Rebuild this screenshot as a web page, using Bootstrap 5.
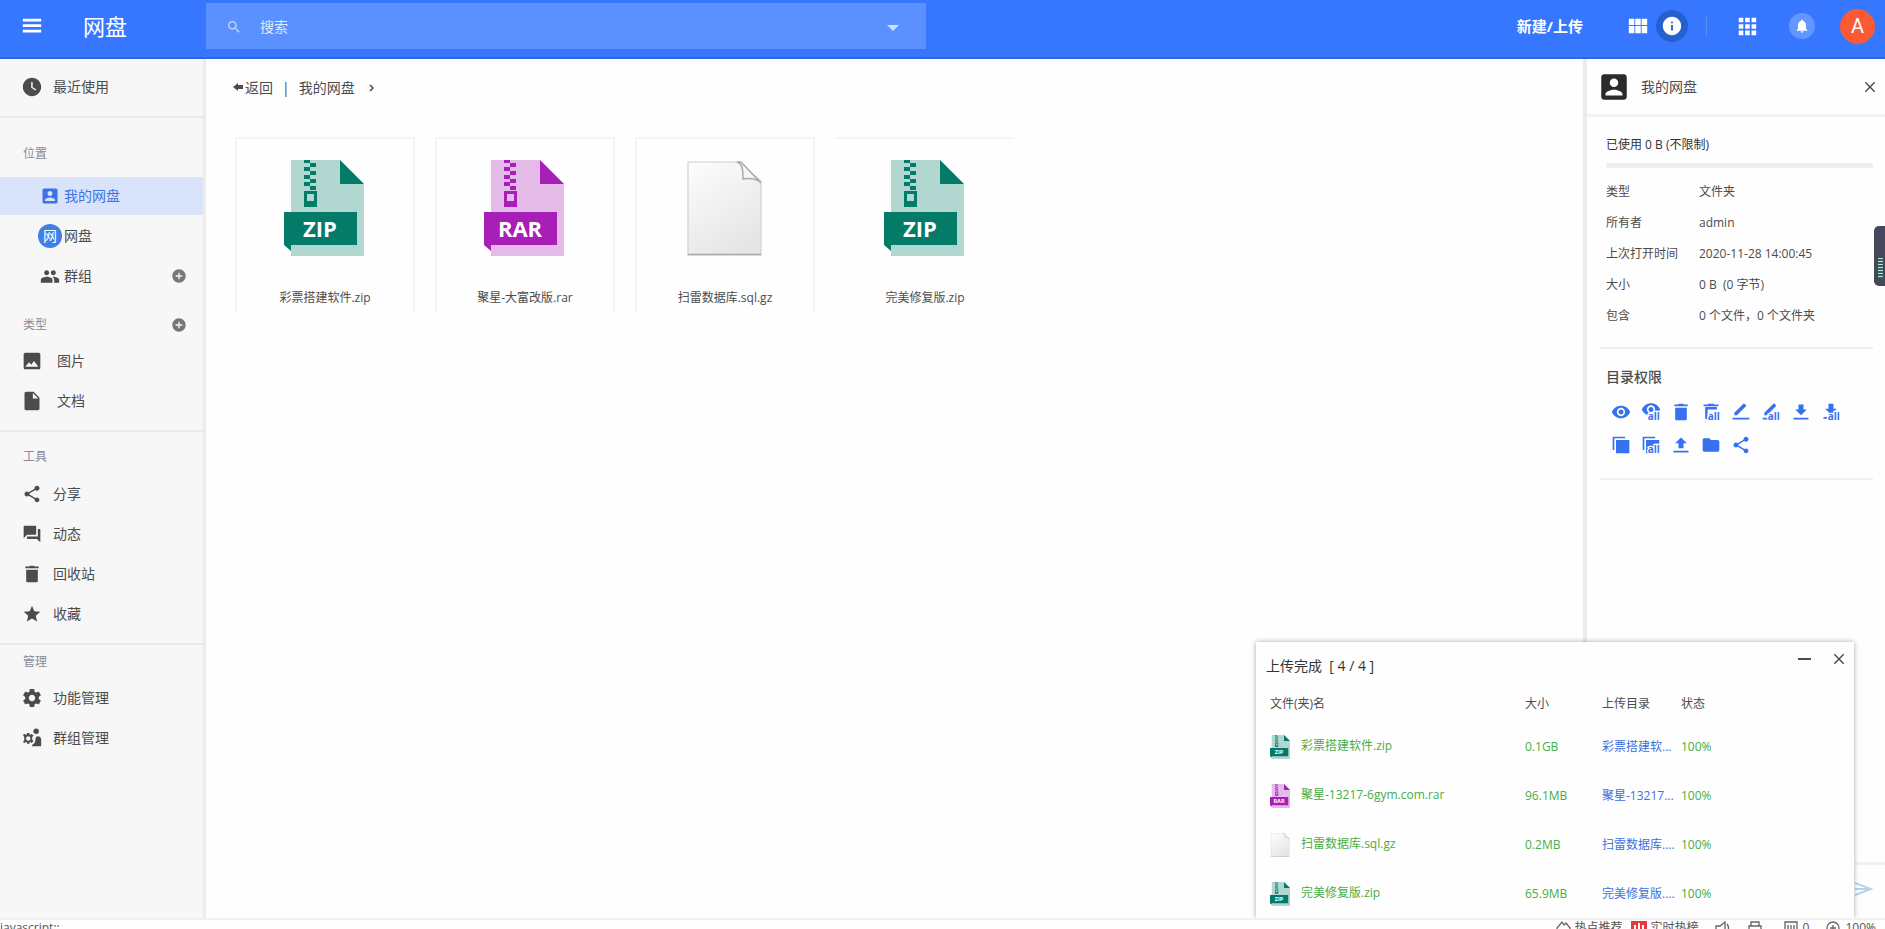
<!DOCTYPE html>
<html lang="zh-CN">
<head>
<meta charset="utf-8">
<meta name="viewport" content="width=device-width, initial-scale=1">
<title>网盘</title>
<link href="https://cdn.jsdelivr.net/npm/bootstrap@5.3.0/dist/css/bootstrap.min.css" rel="stylesheet">
<style>
  :root { --brand: #3777ff; }
  body { font-family: "Open Sans", "Noto Sans CJK SC", sans-serif; font-size: 12px; line-height: 20px; color: #4c4c4c; background: #fefefe; }
  a { color: inherit; text-decoration: none; }
  button { border: 0; padding: 0; background: none; color: inherit; display: flex; align-items: center; justify-content: center; }
  svg { fill: currentColor; flex: none; }
  .ic { width: 20px; height: 20px; }
  .ic-sm { width: 16px; height: 16px; }
  .ic-lg { width: 22px; height: 22px; }
  .t14 { font-size: 14px; }

  .topbar { height: 59px; background: var(--brand); color: #fff; border-bottom: 2px solid #2f66e0; padding: 0 10px 5px 0; }
  .brandbox { width: 206px; padding-left: 21px; gap: 40px; }
  .brandbox h1 { font-size: 22px; line-height: 32px; }
  .searchbox { width: 720px; height: 46px; background: #5b90ff; padding: 2px 22px 0 20px; gap: 16px; }
  .searchbox input { background: none; border: 0; outline: 0; color: #fff; font-size: 14px; }
  .searchbox input::placeholder { color: #dfe9ff; opacity: 1; }
  .newbtn { font-size: 15px; font-weight: 700; margin-right: 44px; }
  .round { border-radius: 50%; }
  .info-on { width: 32px; height: 32px; background: #2560cf; margin-left: 7px; }
  .sep { width: 1px; height: 22px; background: #5b8cf5; margin: 0 29px 0 18px; }
  .bell { width: 26px; height: 26px; background: #6496ff; margin: 0 25px 0 31px; }
  .avatar { width: 35px; height: 35px; background: #fb5a35; font: 20px Roboto, sans-serif; }

  .side { width: 206px; background: #f7f7f7; border-right: 3px solid #ececec; padding-top: 9px; }
  .side hr { margin: 10px 0 0; border: 0; height: 2px; background: #e9e9e9; opacity: 1; }
  .side ul { list-style: none; margin: 0; padding: 0; }
  .side li { height: 38px; margin-bottom: 2px; padding: 0 16px 0 22px; }
  .side li a { font-size: 14px; gap: 11px; }
  .side .wide a { gap: 15px; }
  .side .sub { padding-left: 40px; }
  .side .sub a { gap: 4px; }
  .side li.on { background: #d9e3f9; }
  .side li.on a { color: #3f72e8; }
  .side h2 { font-size: 12px; line-height: 24px; font-weight: 400; color: #8a8a96; padding: 0 16px 0 23px; }
  .side .plus { color: #777; }
  .side .h-place { margin: 24px 0 11px; }
  .side .h-type { margin: 18px 0 5px; }
  .side .h-tool { margin: 13px 0 6px; }
  .side .h-admin { margin: 5px 0; }
  .netdot { width: 24px; height: 24px; margin: 0 -2px; background: #3f7fe6; color: #fff; font-size: 14px; }

  .work { padding: 19px 29px; }
  .crumbs { gap: 9px; font-size: 14px; margin-left: -2px; }
  .files { margin-top: 39px; gap: 20px; }
  .filecard { width: 180px; height: 176px; padding-top: 21px; border: solid #f5f5f5; border-width: 2px 2px 0; }
  .filecard:last-child { border-left-color: transparent; border-right-color: transparent; }
  .filecard span { margin-top: 32px; }
  .bigicon { width: 80px; height: 96px; margin-right: 2px; }

  .details { width: 302px; border-left: 4px solid #ececec; }
  .dhead { height: 58px; border-bottom: 3px solid #f2f2f2; padding: 0 7px 0 10px; gap: 10px; }
  .dbody { padding: 18px 12px 0 13px; }
  .dbody > p { margin: 0 0 8px 6px; color: #333; }
  .quota { height: 5px; margin-left: 6px; border-radius: 0; background: #efefef; }
  .props { margin: 8px 0 16px 6px; }
  .props th { width: 93px; font-weight: 400; }
  .props th, .props td { padding: 0; height: 31px; vertical-align: middle; }
  .dbody hr { margin: 0; border: 0; height: 2px; background: #f0f0f0; opacity: 1; }
  .dbody h3 { font-size: 14px; line-height: 20px; font-weight: 500; margin: 18px 0 15px 6px; }
  .perms { color: #3671ef; gap: 13px 10px; padding: 0 24px 23px 11px; }
  .perms text { font: 700 12px "Open Sans", sans-serif; stroke: #fefefe; stroke-width: 3px; paint-order: stroke; }

  .grip { right: 0; top: 167px; width: 11px; height: 60px; background: #47475c; border-radius: 5px 0 0 5px; padding: 32px 2px 0 4px; z-index: 3; }
  .grip i { display: block; height: 21px; background: repeating-linear-gradient(#b9e4d3 0 1px, #35605c 1px 3px); }
  .corner { right: 0; bottom: 0; width: 30px; height: 56px; border-top: 3px solid #f0f0f0; color: #b5d4ee; padding-bottom: 6px; }

  .uploads { right: 31px; bottom: 0; width: 598px; background: #fefefe; box-shadow: 0 0 5px rgba(0,0,0,.35); clip-path: inset(-8px -8px 0 -8px); z-index: 2; }
  .uphead { height: 42px; padding: 6px 7px 0 10px; }
  .uphead h2 { font-size: 14px; line-height: 20px; font-weight: 400; color: #333; }
  .uphead .ctl { gap: 19px; margin-top: -15px; }
  .uptable { table-layout: fixed; }
  .uptable th { height: 38px; font-weight: 400; padding: 2px 0 0; }
  .uptable td { height: 49px; padding: 1px 0 0; color: #47ad47; white-space: nowrap; }
  .uptable th:first-child, .uptable td:first-child { padding-left: 14px; }
  .c-name { width: 269px; } .c-size { width: 77px; } .c-dir { width: 79px; }
  .uptable td a { color: #3d6fe0; }
  .mini { width: 20px; height: 24px; margin-right: 11px; }

  .status { height: 11px; border-top: 2px solid #f0f0f0; background: #fdfdfd; color: #555; padding-right: 9px; line-height: 16px; }
  .status .ic-sm { fill: none; stroke: #666; stroke-width: 1.3; }
</style>
</head>
<body class="vh-100 d-flex flex-column overflow-hidden">

<svg class="position-absolute" width="0" height="0" aria-hidden="true">
  <linearGradient id="paper" x1="0" y1="0" x2="0.5" y2="1"><stop offset="0" stop-color="#fdfdfd"/><stop offset="1" stop-color="#e6e6e6"/></linearGradient>
</svg>
<svg class="d-none" aria-hidden="true">
  <symbol id="menu" viewBox="0 0 24 24"><path d="M2 19h20v-3H2v3zm0-6h20v-3H2v3zm0-9v3h20V4H2z"/></symbol>
  <symbol id="search" viewBox="0 0 24 24"><path d="M15.5 14h-.79l-.28-.27C15.41 12.59 16 11.11 16 9.5 16 5.91 13.09 3 9.5 3S3 5.91 3 9.5 5.91 16 9.5 16c1.61 0 3.09-.59 4.23-1.57l.27.28v.79l5 4.99L20.49 19l-4.99-5zm-6 0C7.01 14 5 11.99 5 9.5S7.01 5 9.5 5 14 7.01 14 9.5 11.99 14 9.5 14z"/></symbol>
  <symbol id="clock" viewBox="0 0 24 24"><path d="M12 1C6 1 1 6 1 12s5 11 11 11 11-5 11-11S18 1 12 1zm4.2 15.2L11 13V6h1.8v6.2l4.5 2.7-1.1 1.3z"/></symbol>
  <symbol id="person" viewBox="0 0 24 24"><path d="M3 5v14c0 1.1.89 2 2 2h14c1.1 0 2-.9 2-2V5c0-1.1-.9-2-2-2H5c-1.11 0-2 .9-2 2zm12 4c0 1.66-1.34 3-3 3s-3-1.34-3-3 1.34-3 3-3 3 1.34 3 3zm-9 8c0-2 4-3.1 6-3.1s6 1.1 6 3.1v1H6v-1z"/></symbol>
  <symbol id="group" viewBox="0 0 24 24"><path d="M16 11c1.66 0 2.99-1.34 2.99-3S17.66 5 16 5c-1.66 0-3 1.34-3 3s1.34 3 3 3zm-8 0c1.66 0 2.99-1.34 2.99-3S9.66 5 8 5C6.34 5 5 6.34 5 8s1.34 3 3 3zm0 2c-2.33 0-7 1.17-7 3.5V20h14v-3.5c0-2.33-4.67-3.5-7-3.5zm8 0c-.29 0-.62.02-.97.05 1.16.84 1.97 1.97 1.97 3.45V20h6v-3.5c0-2.33-4.67-3.5-7-3.5z"/></symbol>
  <symbol id="plus" viewBox="0 0 24 24"><path d="M12 2C6.48 2 2 6.48 2 12s4.48 10 10 10 10-4.48 10-10S17.52 2 12 2zm5 11h-4v4h-2v-4H7v-2h4V7h2v4h4v2z"/></symbol>
  <symbol id="image" viewBox="0 0 24 24"><path d="M22 20V4c0-1.1-.9-2-2-2H4c-1.1 0-2 .9-2 2v16c0 1.1.9 2 2 2h16c1.1 0 2-.9 2-2zM8.5 13.5l2.5 3.01L14.5 12l5 7H4l4.5-5.5z"/></symbol>
  <symbol id="doc" viewBox="0 0 24 24"><path d="M5 1c-1.1 0-2 .9-2 2v18c0 1.1.89 2 2 2h14c1.1 0 2-.9 2-2V8l-7-7H5zm8 8V2.5L19.5 9H13z"/></symbol>
  <symbol id="share" viewBox="0 0 24 24"><path d="M18 16.08c-.76 0-1.44.3-1.96.77L8.91 12.7c.05-.23.09-.46.09-.7s-.04-.47-.09-.7l7.05-4.11c.54.5 1.25.81 2.04.81 1.66 0 3-1.34 3-3s-1.34-3-3-3-3 1.34-3 3c0 .24.04.47.09.7L8.04 9.81C7.5 9.31 6.79 9 6 9c-1.66 0-3 1.34-3 3s1.34 3 3 3c.79 0 1.5-.31 2.04-.81l7.12 4.16c-.05.21-.08.43-.08.65 0 1.61 1.31 2.92 2.92 2.92 1.61 0 2.92-1.31 2.92-2.92s-1.31-2.92-2.92-2.92z"/></symbol>
  <symbol id="chat" viewBox="0 0 24 24"><path d="M21 6h-2v9H6v2c0 .55.45 1 1 1h11l4 4V7c0-.55-.45-1-1-1zm-4 6V3c0-.55-.45-1-1-1H3c-.55 0-1 .45-1 1v14l4-4h10c.55 0 1-.45 1-1z"/></symbol>
  <symbol id="trash" viewBox="0 0 24 24"><path d="M5 20c0 1.1.9 2 2 2h10c1.1 0 2-.9 2-2V7H5v13zM20 3h-4.5l-1-1h-5l-1 1H4v2h16V3z"/></symbol>
  <symbol id="star" viewBox="0 0 24 24"><path d="M12 17.27L18.18 21l-1.64-7.03L22 9.24l-7.19-.61L12 2 9.19 8.63 2 9.24l5.46 4.73L5.82 21z"/></symbol>
  <symbol id="gear" viewBox="1 1 22 22"><path d="M19.43 12.98c.04-.32.07-.64.07-.98s-.03-.66-.07-.98l2.11-1.65c.19-.15.24-.42.12-.64l-2-3.46c-.12-.22-.39-.3-.61-.22l-2.49 1c-.52-.4-1.08-.73-1.69-.98l-.38-2.65C14.46 2.18 14.25 2 14 2h-4c-.25 0-.46.18-.49.42l-.38 2.65c-.61.25-1.17.59-1.69.98l-2.49-1c-.23-.09-.49 0-.61.22l-2 3.46c-.13.22-.07.49.12.64l2.11 1.65c-.04.32-.07.65-.07.98s.03.66.07.98l-2.11 1.65c-.19.15-.24.42-.12.64l2 3.46c.12.22.39.3.61.22l2.49-1c.52.4 1.08.73 1.69.98l.38 2.65c.03.24.24.42.49.42h4c.25 0 .46-.18.49-.42l.38-2.65c.61-.25 1.17-.59 1.69-.98l2.49 1c.23.09.49 0 .61-.22l2-3.46c.12-.22.07-.49-.12-.64l-2.11-1.65zM12 15.5c-1.93 0-3.5-1.57-3.5-3.5s1.57-3.5 3.5-3.5 3.5 1.57 3.5 3.5-1.57 3.5-3.5 3.5z"/></symbol>
  <symbol id="groupgear" viewBox="0 0 24 24"><circle cx="17" cy="4" r="3.3"/><path d="M12 22c0-3 4-3 4-7 0-3 1-5 3-5s4 1 4 4v8z"/><circle cx="7.5" cy="12.5" r="3.8" fill="none" stroke="currentColor" stroke-width="2.2"/><path d="M6 6h3v3H6zM6 16h3v3H6zM1 8l3-1 1 3-2 1zM1 17l2-3 2 1-1 3zM11 7l3 2-2 2-2-1zM12 14l2 2-3 2-1-3z"/></symbol>
  <symbol id="tiles" viewBox="0 0 24 24"><path d="M2 4h6v7H2zM9 4h6v7H9zM16 4h6v7h-6zM2 12h6v8H2zM9 12h6v8H9zM16 12h6v8h-6z"/></symbol>
  <symbol id="info" viewBox="0 0 24 24"><path d="M12 2C6.48 2 2 6.48 2 12s4.48 10 10 10 10-4.48 10-10S17.52 2 12 2zm1 15h-2v-6h2v6zm0-8h-2V7h2v2z"/></symbol>
  <symbol id="apps" viewBox="0 0 24 24"><path d="M3 3h5v5H3zM10 3h5v5h-5zM17 3h5v5h-5zM3 10h5v5H3zM10 10h5v5h-5zM17 10h5v5h-5zM3 17h5v5H3zM10 17h5v5h-5zM17 17h5v5h-5z"/></symbol>
  <symbol id="bell" viewBox="0 0 24 24"><path d="M12 22c1.1 0 2-.9 2-2h-4c0 1.1.89 2 2 2zm6-6v-5c0-3.07-1.64-5.64-4.5-6.32V4c0-.83-.67-1.5-1.5-1.5s-1.5.67-1.5 1.5v.68C7.63 5.36 6 7.92 6 11v5l-2 2v1h16v-1l-2-2z"/></symbol>
  <symbol id="close" viewBox="0 0 24 24"><path d="M5 5l14 14M19 5L5 19" stroke="currentColor" stroke-width="2.2"/></symbol>
  <symbol id="eye" viewBox="0 0 24 24"><path d="M12 4.5C7 4.5 2.73 7.61 1 12c1.73 4.39 6 7.5 11 7.5s9.27-3.11 11-7.5c-1.73-4.39-6-7.5-11-7.5zM12 17c-2.76 0-5-2.24-5-5s2.24-5 5-5 5 2.24 5 5-2.24 5-5 5zm0-8c-1.66 0-3 1.34-3 3s1.34 3 3 3 3-1.34 3-3-1.34-3-3-3z"/></symbol>
  <symbol id="pen" viewBox="0 0 24 24"><path d="M4 16v-3L15.5 1.500l3 3L7 16zM2 19h20v2H2z"/></symbol>
  <symbol id="down" viewBox="0 0 24 24"><path d="M19 9h-4V3H9v6H5l7 7 7-7zM3 19v2h18v-2H3z"/></symbol>
  <symbol id="up" viewBox="0 0 24 24"><path d="M9 16h6v-6h4l-7-7-7 7h4zm-6 3h18v2H3z"/></symbol>
  <symbol id="copy" viewBox="0 0 24 24"><path d="M17 2H2v16h2V4h13zM6 6h16v16H6z"/></symbol>
  <symbol id="folder" viewBox="0 0 24 24"><path d="M10 4H4c-1.1 0-1.99.9-1.99 2L2 18c0 1.1.9 2 2 2h16c1.1 0 2-.9 2-2V8c0-1.1-.9-2-2-2h-8l-2-2z"/></symbol>
  <symbol id="archive" viewBox="0 0 80 96">
    <path d="M7 0h49l24 24v72H7z" opacity=".3"/><path d="M56 0l24 24H56z"/>
    <path d="M20 0h6v3h-6zM26 3h6v4h-6zM20 7h6v4h-6zM26 11h6v4h-6zM20 15h6v4h-6zM26 19h6v4h-6zM20 22h6v4h-6zM26 26h6v4h-6z"/>
    <path fill-rule="evenodd" d="M20 31h13v16H20zM23 34v7h7v-7z"/>
    <path d="M0 52h73v33H7v6l-7-6z"/>
  </symbol>
  <symbol id="zip" viewBox="0 0 80 96"><use href="#archive" color="#047b68"/><text x="36" y="77" text-anchor="middle" font-family="Open Sans" font-weight="700" font-size="22" fill="#fff">ZIP</text></symbol>
  <symbol id="rar" viewBox="0 0 80 96"><use href="#archive" color="#a81fb8"/><text x="36" y="77" text-anchor="middle" font-family="Open Sans" font-weight="700" font-size="22" fill="#fff">RAR</text></symbol>
  <symbol id="blank" viewBox="0 0 80 96">
    <path d="M4 2h51l22 19v74H4z" fill="url(#paper)" stroke="#d0d0d0" stroke-width="1.2"/>
    <path d="M4 94.5h73" stroke="#aaa" stroke-width="1.5"/><path d="M53 2c6 2 6 9 6 17 7-1 14 0 18 4L57 2z" fill="#f6f6f6" stroke="#aaa" stroke-width="1.5"/>
  </symbol>
</svg>

<header class="topbar d-flex align-items-center flex-shrink-0">
  <div class="brandbox d-flex align-items-center flex-shrink-0">
    <button type="button" aria-label="菜单"><svg class="ic-lg"><use href="#menu"/></svg></button>
    <h1 class="m-0 fw-normal">网盘</h1>
  </div>
  <form class="searchbox d-flex align-items-center">
    <svg class="ic-sm" color="#c3d7ff"><use href="#search"/></svg>
    <input class="flex-grow-1" type="text" placeholder="搜索" aria-label="搜索">
    <button type="button" aria-label="高级搜索"><svg width="22" height="20" viewBox="0 0 22 20" color="#c9e2ff"><path d="M5 8h12l-6 6z"/></svg></button>
  </form>
  <div class="d-flex align-items-center ms-auto">
    <button class="newbtn" type="button">新建/上传</button>
    <button type="button" aria-label="视图"><svg class="ic-lg"><use href="#tiles"/></svg></button>
    <button class="info-on round" type="button" aria-label="详情"><svg class="ic-lg"><use href="#info"/></svg></button>
    <span class="sep"></span>
    <button type="button" aria-label="应用"><svg class="ic-lg"><use href="#apps"/></svg></button>
    <button class="bell round" type="button" aria-label="通知"><svg class="ic-sm"><use href="#bell"/></svg></button>
    <button class="avatar round" type="button">A</button>
  </div>
</header>

<main class="d-flex flex-grow-1 position-relative overflow-hidden">
  <nav class="side flex-shrink-0">
    <ul>
      <li class="d-flex align-items-center"><a class="d-flex align-items-center" href="#"><svg class="ic"><use href="#clock"/></svg>最近使用</a></li>
    </ul>
    <hr>
    <h2 class="h-place">位置</h2>
    <ul>
      <li class="sub on d-flex align-items-center"><a class="d-flex align-items-center" href="#"><svg class="ic"><use href="#person"/></svg>我的网盘</a></li>
      <li class="sub d-flex align-items-center"><a class="d-flex align-items-center" href="#"><i class="netdot round fst-normal d-flex align-items-center justify-content-center">网</i><span>网盘</span></a></li>
      <li class="sub d-flex align-items-center"><a class="d-flex align-items-center" href="#"><svg class="ic"><use href="#group"/></svg>群组</a><button class="plus ms-auto" type="button" aria-label="新建群组"><svg class="ic-sm"><use href="#plus"/></svg></button></li>
    </ul>
    <h2 class="h-type d-flex align-items-center">类型<button class="plus ms-auto" type="button" aria-label="新建类型"><svg class="ic-sm"><use href="#plus"/></svg></button></h2>
    <ul class="wide">
      <li class="d-flex align-items-center"><a class="d-flex align-items-center" href="#"><svg class="ic"><use href="#image"/></svg>图片</a></li>
      <li class="d-flex align-items-center"><a class="d-flex align-items-center" href="#"><svg class="ic"><use href="#doc"/></svg>文档</a></li>
    </ul>
    <hr>
    <h2 class="h-tool">工具</h2>
    <ul>
      <li class="d-flex align-items-center"><a class="d-flex align-items-center" href="#"><svg class="ic"><use href="#share"/></svg>分享</a></li>
      <li class="d-flex align-items-center"><a class="d-flex align-items-center" href="#"><svg class="ic"><use href="#chat"/></svg>动态</a></li>
      <li class="d-flex align-items-center"><a class="d-flex align-items-center" href="#"><svg class="ic"><use href="#trash"/></svg>回收站</a></li>
      <li class="d-flex align-items-center"><a class="d-flex align-items-center" href="#"><svg class="ic"><use href="#star"/></svg>收藏</a></li>
    </ul>
    <hr>
    <h2 class="h-admin">管理</h2>
    <ul>
      <li class="d-flex align-items-center"><a class="d-flex align-items-center" href="#"><svg class="ic"><use href="#gear"/></svg>功能管理</a></li>
      <li class="d-flex align-items-center"><a class="d-flex align-items-center" href="#"><svg class="ic"><use href="#groupgear"/></svg>群组管理</a></li>
    </ul>
  </nav>

  <section class="work flex-grow-1">
    <div class="crumbs d-flex align-items-center">
      <a class="d-flex align-items-center" href="#"><svg width="12" height="12" viewBox="0 0 12 12"><path d="M0 5l5-4v2h5v4H5v2z"/></svg>返回</a>
      <span>|</span>
      <a href="#">我的网盘</a>
      <svg class="ms-1" width="8" height="8" viewBox="0 0 8 8"><path d="M2 1l3 3-3 3" fill="none" stroke="currentColor" stroke-width="1.5"/></svg>
    </div>
    <div class="files d-flex flex-wrap">
      <a class="filecard d-flex flex-column align-items-center" href="#"><svg class="bigicon"><use href="#zip"/></svg><span>彩票搭建软件.zip</span></a>
      <a class="filecard d-flex flex-column align-items-center" href="#"><svg class="bigicon"><use href="#rar"/></svg><span>聚星-大富改版.rar</span></a>
      <a class="filecard d-flex flex-column align-items-center" href="#"><svg class="bigicon"><use href="#blank"/></svg><span>扫雷数据库.sql.gz</span></a>
      <a class="filecard d-flex flex-column align-items-center" href="#"><svg class="bigicon"><use href="#zip"/></svg><span>完美修复版.zip</span></a>
    </div>
  </section>

  <aside class="details flex-shrink-0">
    <div class="dhead d-flex align-items-center t14">
      <svg width="34" height="34" color="#2b2b2b"><use href="#person"/></svg>
      <span>我的网盘</span>
      <button class="ms-auto" type="button" aria-label="关闭"><svg class="ic-sm"><use href="#close"/></svg></button>
    </div>
    <div class="dbody">
      <p>已使用 0 B (不限制)</p>
      <div class="quota progress" role="progressbar" aria-label="已用空间" aria-valuenow="0"></div>
      <table class="props">
        <tr><th>类型</th><td>文件夹</td></tr>
        <tr><th>所有者</th><td>admin</td></tr>
        <tr><th>上次打开时间</th><td>2020-11-28 14:00:45</td></tr>
        <tr><th>大小</th><td>0 B&nbsp; (0 字节)</td></tr>
        <tr><th>包含</th><td>0 个文件，0 个文件夹</td></tr>
      </table>
      <hr>
      <h3>目录权限</h3>
      <div class="perms d-flex flex-wrap">
        <svg class="ic"><use href="#eye"/></svg>
        <svg class="ic" viewBox="0 0 24 24"><use href="#eye" width="24" height="24" y="-3"/><text x="8" y="22">all</text></svg>
        <svg class="ic"><use href="#trash"/></svg>
        <svg class="ic" viewBox="0 0 24 24"><path d="M21 3h-5l-1-1H9L8 3H3v2h18zM5 6h14v3H8v12H7q-2 0-2-2z"/><text x="8" y="22">all</text></svg>
        <svg class="ic"><use href="#pen"/></svg>
        <svg class="ic" viewBox="0 0 24 24"><use href="#pen" width="24" height="24"/><text x="8" y="22">all</text></svg>
        <svg class="ic"><use href="#down"/></svg>
        <svg class="ic" viewBox="0 0 24 24"><use href="#down" width="24" height="24" y="-1"/><text x="8" y="22">all</text></svg>
        <svg class="ic"><use href="#copy"/></svg>
        <svg class="ic" viewBox="0 0 24 24"><use href="#copy" width="24" height="24"/><text x="8" y="22">all</text></svg>
        <svg class="ic"><use href="#up"/></svg>
        <svg class="ic"><use href="#folder"/></svg>
        <svg class="ic"><use href="#share"/></svg>
      </div>
      <hr>
    </div>
  </aside>

  <div class="grip position-absolute"><i></i></div>
  <div class="corner position-absolute d-flex align-items-center"><svg width="18" height="16" viewBox="0 0 18 16"><path d="M0 2l16 6-16 6M0 8h14" fill="none" stroke="currentColor" stroke-width="2"/></svg></div>

  <section class="uploads position-absolute">
    <div class="uphead d-flex align-items-center justify-content-between">
      <h2 class="m-0">上传完成&nbsp; [ 4 / 4 ]</h2>
      <div class="ctl d-flex">
        <button type="button" aria-label="最小化"><svg width="15" height="16" viewBox="0 0 15 16"><path d="M1 7h13v2H1z"/></svg></button>
        <button type="button" aria-label="关闭"><svg class="ic-sm"><use href="#close"/></svg></button>
      </div>
    </div>
    <table class="uptable w-100">
      <thead><tr><th class="c-name">文件(夹)名</th><th class="c-size">大小</th><th class="c-dir">上传目录</th><th>状态</th></tr></thead>
      <tbody>
        <tr><td><svg class="mini"><use href="#zip"/></svg>彩票搭建软件.zip</td><td>0.1GB</td><td><a href="#">彩票搭建软...</a></td><td>100%</td></tr>
        <tr><td><svg class="mini"><use href="#rar"/></svg>聚星-13217-6gym.com.rar</td><td>96.1MB</td><td><a href="#">聚星-13217...</a></td><td>100%</td></tr>
        <tr><td><svg class="mini"><use href="#blank"/></svg>扫雷数据库.sql.gz</td><td>0.2MB</td><td><a href="#">扫雷数据库....</a></td><td>100%</td></tr>
        <tr><td><svg class="mini"><use href="#zip"/></svg>完美修复版.zip</td><td>65.9MB</td><td><a href="#">完美修复版....</a></td><td>100%</td></tr>
      </tbody>
    </table>
  </section>
</main>

<footer class="status d-flex overflow-hidden flex-shrink-0 align-items-start">
  <span>javascript:;</span>
  <a class="ms-auto d-flex me-2" href="#"><svg class="ic-sm me-1" viewBox="0 0 16 16"><path d="M2 14V8l5-6 2 3 2-2 4 5v6"/></svg>热点推荐</a>
  <a class="d-flex me-3" href="#"><svg width="16" height="16" class="me-1" viewBox="0 0 16 16"><path fill="#e23b3b" d="M0 1h16v15H0z"/><path d="M4 12V5M8 12V3M12 12V5" stroke="#fff" stroke-width="2"/></svg>实时热榜</a>
  <svg class="ic-sm me-3" viewBox="0 0 16 16"><path d="M1 6h4l5-4v12l-5-4H1zM12 4q3 4 0 8"/></svg>
  <svg class="ic-sm me-3" viewBox="0 0 16 16"><path d="M4 6V2h8v4M2 6h12v7H2zM5 10h6"/></svg>
  <span class="d-flex me-3 ms-1"><svg class="ic-sm me-1" viewBox="0 0 16 16"><path d="M2 2h12v12H2zM5 5v6M8 5v6M11 5v6"/></svg>0</span>
  <span class="d-flex"><svg class="ic-sm me-1" viewBox="0 0 16 16"><circle cx="8" cy="8" r="6"/><path d="M8 5v6M5 8h6"/></svg>100%</span>
</footer>
<script src="https://cdn.jsdelivr.net/npm/bootstrap@5.3.0/dist/js/bootstrap.bundle.min.js"></script>
</body>
</html>
